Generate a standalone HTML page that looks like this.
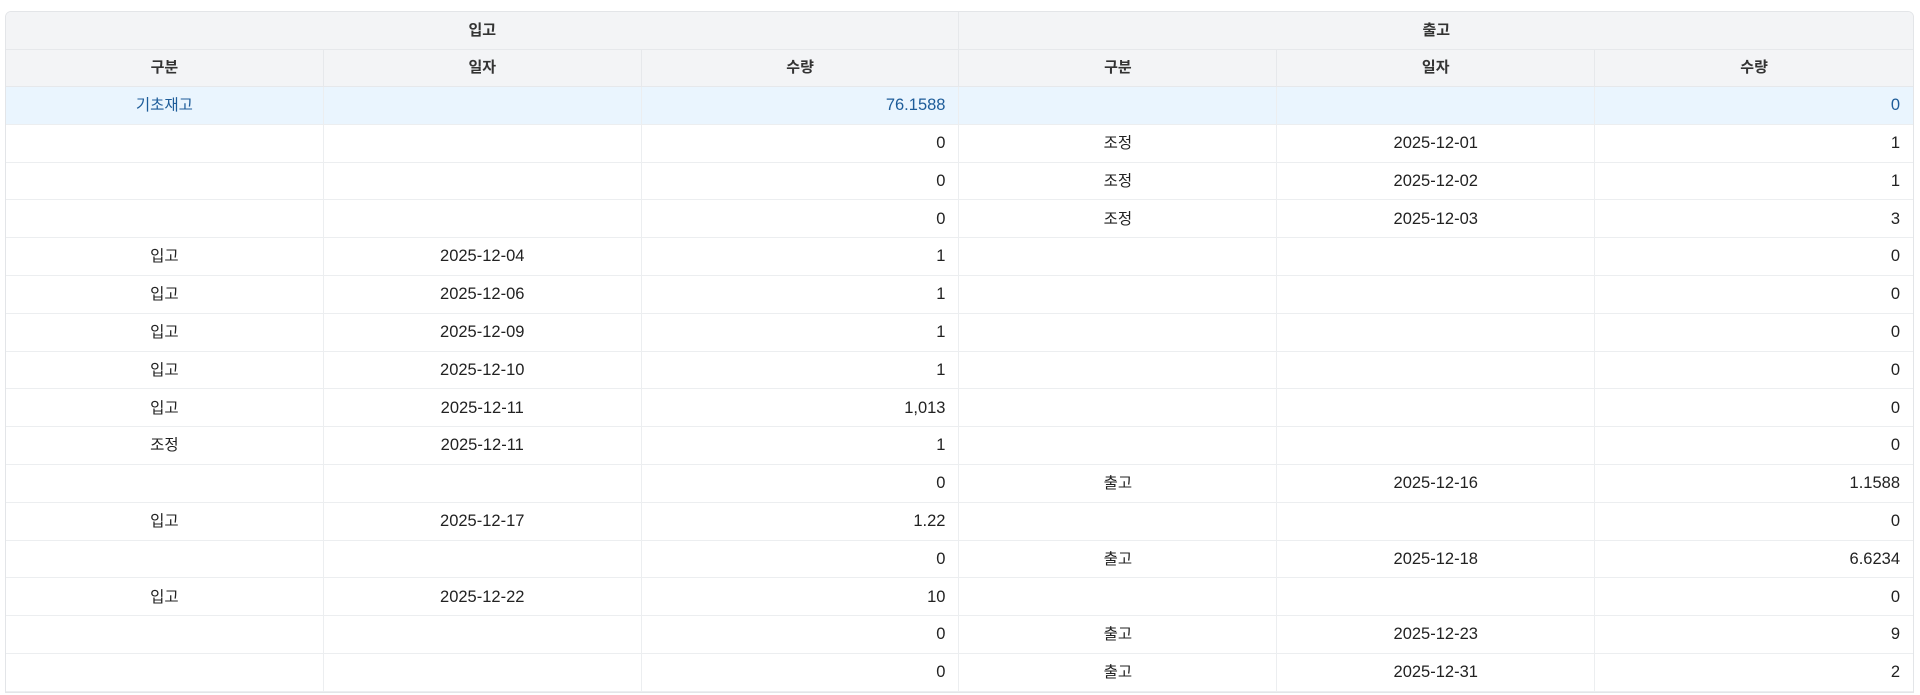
<!DOCTYPE html>
<html><head><meta charset="utf-8"><style>
body{margin:0;background:#fff;width:1920px;height:695px;overflow:hidden;font-family:"Liberation Sans","Noto Sans CJK KR",sans-serif;}
table{position:absolute;left:5px;top:11px;width:1909px;border-collapse:separate;border-spacing:0;table-layout:fixed;font-size:16.5px;color:#222;border:1px solid #e3e5e8;border-radius:6px 6px 0 0;overflow:hidden}
th{background:#f3f4f6;font-weight:600;color:#333;height:36.5px;padding:0;line-height:1;border-right:1px solid #e6e8eb;border-bottom:1px solid #e6e8eb;font-size:15px}
th span{position:relative;top:0px}
td{height:36.8px;line-height:1;border-right:1px solid #eceef0;border-bottom:1px solid #eceef0;text-align:center;padding:0}
td.n{text-align:right;padding-right:13px}
.k span{font-size:15.5px;position:relative;top:0px}
tr td:last-child,tr th:last-child{border-right:none}
tr.h td{background:#eaf5fe;color:#1d5c99}
</style></head><body>
<table>
<colgroup><col><col><col><col><col><col></colgroup>
<tr><th colspan="3"><span>입고</span></th><th colspan="3"><span>출고</span></th></tr>
<tr><th><span>구분</span></th><th><span>일자</span></th><th><span>수량</span></th><th><span>구분</span></th><th><span>일자</span></th><th><span>수량</span></th></tr>
<tr class="h"><td class="k"><span>기초재고</span></td><td></td><td class="n">76.1588</td><td></td><td></td><td class="n">0</td></tr>
<tr><td></td><td></td><td class="n">0</td><td class="k"><span>조정</span></td><td>2025-12-01</td><td class="n">1</td></tr>
<tr><td></td><td></td><td class="n">0</td><td class="k"><span>조정</span></td><td>2025-12-02</td><td class="n">1</td></tr>
<tr><td></td><td></td><td class="n">0</td><td class="k"><span>조정</span></td><td>2025-12-03</td><td class="n">3</td></tr>
<tr><td class="k"><span>입고</span></td><td>2025-12-04</td><td class="n">1</td><td></td><td></td><td class="n">0</td></tr>
<tr><td class="k"><span>입고</span></td><td>2025-12-06</td><td class="n">1</td><td></td><td></td><td class="n">0</td></tr>
<tr><td class="k"><span>입고</span></td><td>2025-12-09</td><td class="n">1</td><td></td><td></td><td class="n">0</td></tr>
<tr><td class="k"><span>입고</span></td><td>2025-12-10</td><td class="n">1</td><td></td><td></td><td class="n">0</td></tr>
<tr><td class="k"><span>입고</span></td><td>2025-12-11</td><td class="n">1,013</td><td></td><td></td><td class="n">0</td></tr>
<tr><td class="k"><span>조정</span></td><td>2025-12-11</td><td class="n">1</td><td></td><td></td><td class="n">0</td></tr>
<tr><td></td><td></td><td class="n">0</td><td class="k"><span>출고</span></td><td>2025-12-16</td><td class="n">1.1588</td></tr>
<tr><td class="k"><span>입고</span></td><td>2025-12-17</td><td class="n">1.22</td><td></td><td></td><td class="n">0</td></tr>
<tr><td></td><td></td><td class="n">0</td><td class="k"><span>출고</span></td><td>2025-12-18</td><td class="n">6.6234</td></tr>
<tr><td class="k"><span>입고</span></td><td>2025-12-22</td><td class="n">10</td><td></td><td></td><td class="n">0</td></tr>
<tr><td></td><td></td><td class="n">0</td><td class="k"><span>출고</span></td><td>2025-12-23</td><td class="n">9</td></tr>
<tr><td></td><td></td><td class="n">0</td><td class="k"><span>출고</span></td><td>2025-12-31</td><td class="n">2</td></tr>
</table>
</body></html>
